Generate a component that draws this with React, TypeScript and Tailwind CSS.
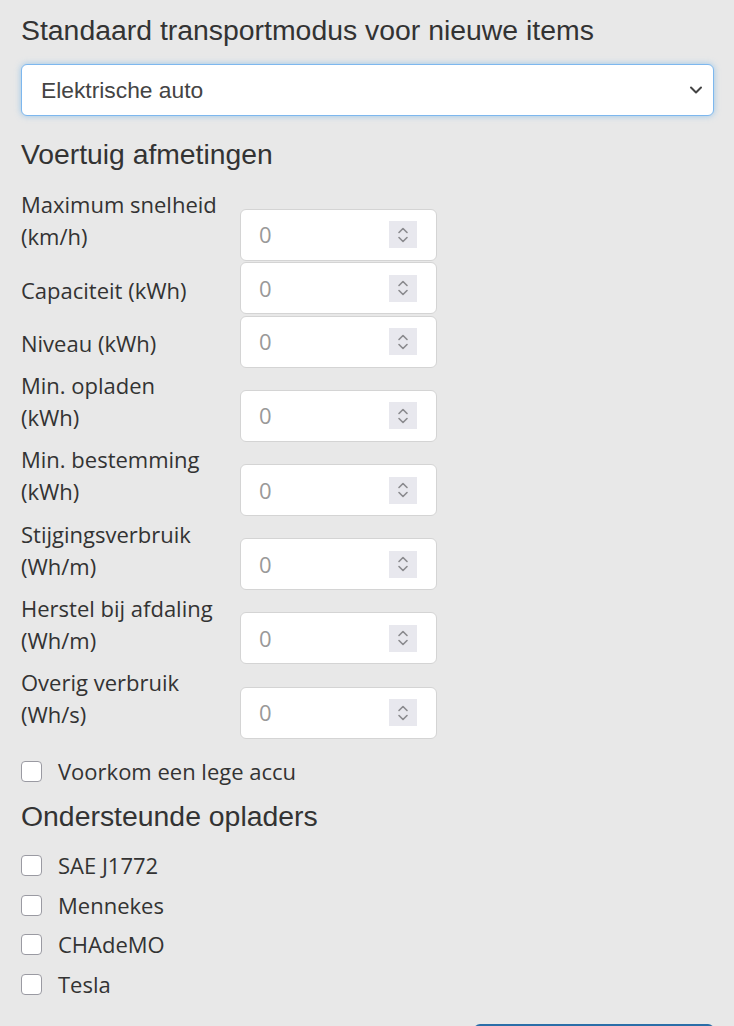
import React from "react";

const rows: { label: string[] }[] = [
  { label: ["Maximum snelheid", "(km/h)"] },
  { label: ["Capaciteit (kWh)"] },
  { label: ["Niveau (kWh)"] },
  { label: ["Min. opladen", "(kWh)"] },
  { label: ["Min. bestemming", "(kWh)"] },
  { label: ["Stijgingsverbruik", "(Wh/m)"] },
  { label: ["Herstel bij afdaling", "(Wh/m)"] },
  { label: ["Overig verbruik", "(Wh/s)"] },
];

function Spinner() {
  return (
    <div className="w-[28px] h-[27px] bg-[#e8e8ee] flex items-center justify-center">
      <svg width="14" height="20" viewBox="0 0 14 20" fill="none" stroke="#8a8a8e" strokeWidth="1.6" strokeLinecap="round" strokeLinejoin="round">
        <path d="M3 7.5 L7 3.5 L11 7.5" />
        <path d="M3 12.5 L7 16.5 L11 12.5" />
      </svg>
    </div>
  );
}

function Check({ label }: { label: string }) {
  return (
    <label className="flex items-center gap-[16px] h-[39.5px]">
      <span className="w-[21px] h-[21px] rounded-[4px] border border-[#9a9aa2] bg-white shrink-0" />
      <span className="text-[22px] text-[#333] font-['Open_Sans',sans-serif]">{label}</span>
    </label>
  );
}

export default function App() {
  return (
    <div className="min-h-[1026px] w-[734px] bg-[#e8e8e8] pl-[21px] pr-[20px] pt-[12px] overflow-hidden font-['Open_Sans',sans-serif] text-[#333]">
      <h1 className="font-['Liberation_Sans',Arial,sans-serif] text-[28.4px] leading-[36px] text-[#333]">
        Standaard transportmodus voor nieuwe items
      </h1>
      <div className="mt-[16px] h-[52px] rounded-[6px] bg-white border border-[#7db7ee] shadow-[0_0_6px_rgba(102,175,233,0.6)] flex items-center justify-between pl-[19px] pr-[10px]">
        <span className="font-['Liberation_Sans',Arial,sans-serif] text-[22.8px] text-[#444]">Elektrische auto</span>
        <svg width="14" height="10" viewBox="0 0 14 10" fill="none" stroke="#444" strokeWidth="2" strokeLinecap="round" strokeLinejoin="round">
          <path d="M2 2.5 L7 7.5 L12 2.5" />
        </svg>
      </div>
      <h2 className="mt-[22px] font-['Liberation_Sans',Arial,sans-serif] text-[28.3px] leading-[32px] text-[#333]">
        Voertuig afmetingen
      </h2>
      <div className="mt-[18px] flex flex-col gap-[1.5px]">
        {rows.map((r, i) => (
          <div key={i} className="flex items-end">
            <div className="w-[219px] pb-[8.7px] text-[22px] leading-[32px] text-[#333]">
              {r.label.map((l, j) => (
                <div key={j}>{l}</div>
              ))}
            </div>
            <div className="w-[197px] h-[52px] rounded-[6px] bg-white border border-[#d4d4d4] flex items-center justify-between pl-[18px] pr-[19px]">
              <span className="text-[22px] text-[#999]">0</span>
              <Spinner />
            </div>
          </div>
        ))}
      </div>
      <div className="mt-[13px]">
        <Check label="Voorkom een lege accu" />
      </div>
      <h2 className="mt-[7px] font-['Liberation_Sans',Arial,sans-serif] text-[28.4px] leading-[36px] text-[#333]">
        Ondersteunde opladers
      </h2>
      <div className="mt-[12px] flex flex-col">
        <Check label="SAE J1772" />
        <Check label="Mennekes" />
        <Check label="CHAdeMO" />
        <Check label="Tesla" />
      </div>
      <div className="flex justify-end mt-[20px]">
        <div className="w-[240px] h-[40px] rounded-[6px] bg-[#2a6ea8]" />
      </div>
    </div>
  );
}
